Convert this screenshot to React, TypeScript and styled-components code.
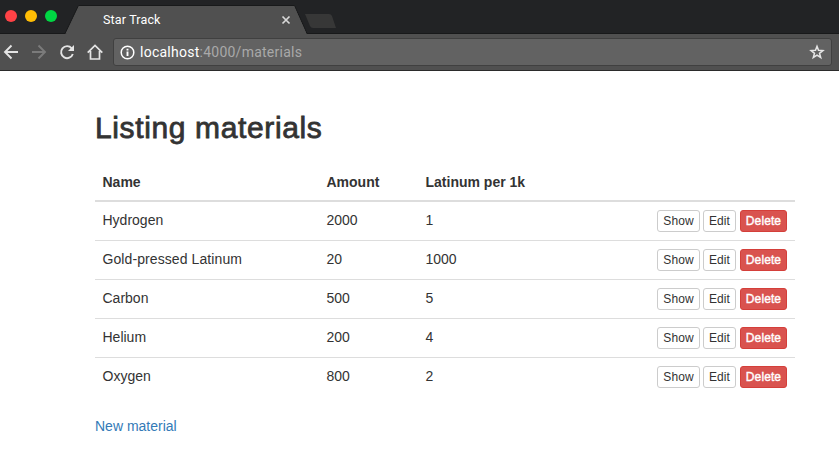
import React from 'react';
import styled, { createGlobalStyle } from 'styled-components';

const GlobalStyle = createGlobalStyle`
  * { box-sizing: border-box; }
  body {
    margin: 0;
    background: #fff;
    color: #333;
    font: 14px/20px "Liberation Sans", Arial, sans-serif;
    overflow: hidden;
  }
`;

const Chrome = styled.header`
  height: 71px;
  background: #505050;
  border-bottom: 1px solid #2b2b2b;
`;

const TabStrip = styled.div`
  position: relative;
  height: 34px;
`;

const TabShapes = styled.svg`
  position: absolute;
  inset: 0;
`;

const TabLabel = styled.div`
  position: absolute;
  left: 103px;
  top: 10px;
  color: #fff;
  font: 12.5px/20px Roboto, sans-serif;
  letter-spacing: 0.15px;
`;

const Toolbar = styled.div`
  display: flex;
  height: 36px;
  padding: 4px 7px 4px 0;
`;

const NavIcons = styled.svg`
  flex: 0 0 113px;
  height: 28px;
`;

const AddressBar = styled.div`
  flex: 1;
  display: flex;
  align-items: center;
  height: 28px;
  padding: 0 6px;
  background: #626262;
  border: 1px solid #404040;
  border-radius: 3px;
  color: #a9a9a9;
  font: 14px/20px Roboto, sans-serif;
  letter-spacing: 0.25px;
`;

const Url = styled.div`
  flex: 1;
  margin-left: 5px;
`;

const Host = styled.span`
  color: #fff;
`;

const Page = styled.main`
  width: 700px;
  margin-left: 95px;
  padding-top: 40px;
`;

const Title = styled.h2`
  margin: 0 0 19px;
  font-size: 30px;
  line-height: 33px;
  font-weight: 400;
  letter-spacing: 0.63px;
  -webkit-text-stroke: 0.8px #333;
`;

const Row = styled.div<{ $line?: boolean }>`
  display: grid;
  grid-template-columns: 224px 99px 1fr auto;
  padding: 8px 8px 8px 7.5px;
  border-top: ${(p) => (p.$line ? '1px solid #ddd' : 'none')};
`;

const HeadRow = styled(Row)`
  height: 39px;
  padding-top: 9px;
  border-bottom: 2px solid #ddd;
  font-weight: 700;
`;

const Cell = styled.div<{ $track?: number }>`
  letter-spacing: ${(p) => p.$track ?? 0}px;
`;

const Actions = styled.div`
  display: flex;
  gap: 3px;
`;

const Button = styled.button<{ $width: number; $danger?: boolean }>`
  width: ${(p) => p.$width}px;
  height: 22px;
  margin-left: ${(p) => (p.$danger ? 1 : 0)}px;
  padding: 0;
  border: 1px solid ${(p) => (p.$danger ? '#d43f3a' : '#ccc')};
  border-radius: 3px;
  background: ${(p) => (p.$danger ? '#d9534f' : '#fff')};
  color: ${(p) => (p.$danger ? '#fff' : '#333')};
  font: 12px/18px "Liberation Sans", Arial, sans-serif;
  letter-spacing: 0.1px;
  -webkit-text-stroke: ${(p) => (p.$danger ? '0.4px #fff' : '0')};
`;

const NewLink = styled.a`
  display: inline-block;
  margin-top: 20px;
  color: #337ab7;
  text-decoration: none;
`;

const materials = [
  { name: 'Hydrogen', amount: 2000, latinum: 1 },
  { name: 'Gold-pressed Latinum', amount: 20, latinum: 1000 },
  { name: 'Carbon', amount: 500, latinum: 5 },
  { name: 'Helium', amount: 200, latinum: 4 },
  { name: 'Oxygen', amount: 800, latinum: 2 },
];

export default function App() {
  return (
    <>
      <GlobalStyle />
      <Chrome>
        <TabStrip>
          <TabShapes width="839" height="34" viewBox="0 0 839 34">
            <path d="M0 0H839V34H0Z" fill="#222325" />
            <path d="M0 33.5H65L78.5 5.5H294.5L307 33.5H839" fill="#505050" stroke="#18191a" />
            <path d="M66 34L79 6H294L306.500 34Z" fill="#505050" />
            <path d="M305 14H329Q331 14 332 16L336 28H313Q311 28 310 26Z" fill="#373737" />
            <circle cx="11" cy="16" r="6" fill="#ff4246" />
            <circle cx="31" cy="16" r="6" fill="#ffbd05" />
            <circle cx="51" cy="16" r="6" fill="#00d643" />
            <path d="M282.500 16.500L289.500 23.500M289.500 16.500L282.500 23.500" stroke="#d8d8d8" strokeWidth="1.7" />
          </TabShapes>
          <TabLabel>Star Track</TabLabel>
        </TabStrip>
        <Toolbar>
          <NavIcons width="113" height="28" viewBox="0 38 113 28" fill="none" stroke="#e4e4e4" strokeWidth="1.9">
            <path d="M18 52H5.500M11.500 45.500L5 52L11.500 58.500" />
            <path d="M32 52H44.500M38.500 45.500L45 52L38.500 58.500" stroke="#7b7b7b" />
            <path d="M71.700 48.300A6 6 0 1 0 72.800 54" />
            <path d="M74 45V51H68Z" fill="#e4e4e4" stroke="none" />
            <path d="M87.700 52.700L95 45.400L102.300 52.700M90.500 51V59H99.500V51" strokeWidth="1.700" />
          </NavIcons>
          <AddressBar>
            <svg width="15" height="15" viewBox="0 0 15 15" fill="none" stroke="#fff" strokeWidth="1.5">
              <circle cx="7.500" cy="7.500" r="6.300" />
              <path d="M7.500 6.500V11M7.500 3.800V5.400" strokeWidth="1.900" />
            </svg>
            <Url><Host>localhost</Host>:4000/materials</Url>
            <svg width="16" height="16" viewBox="0 0 16 16" fill="none" stroke="#e6e6e6" strokeWidth="1.500">
              <path d="M8 2.300L9.500 6.300L13.900 6.600L10.500 9.300L11.700 13.500L8 11.200L4.300 13.500L5.500 9.300L2.100 6.600L6.500 6.300Z" />
            </svg>
          </AddressBar>
        </Toolbar>
      </Chrome>
      <Page>
        <Title>Listing materials</Title>
        <HeadRow>
          <Cell>Name</Cell>
          <Cell>Amount</Cell>
          <Cell>Latinum per 1k</Cell>
        </HeadRow>
        {materials.map((m, i) => (
          <Row key={m.name} $line={i > 0}>
            <Cell $track={m.name.length > 10 ? 0.09 : 0}>{m.name}</Cell>
            <Cell>{m.amount}</Cell>
            <Cell>{m.latinum}</Cell>
            <Actions>
              <Button $width={43}>Show</Button>
              <Button $width={33}>Edit</Button>
              <Button $width={47} $danger>Delete</Button>
            </Actions>
          </Row>
        ))}
        <NewLink>New material</NewLink>
      </Page>
    </>
  );
}
